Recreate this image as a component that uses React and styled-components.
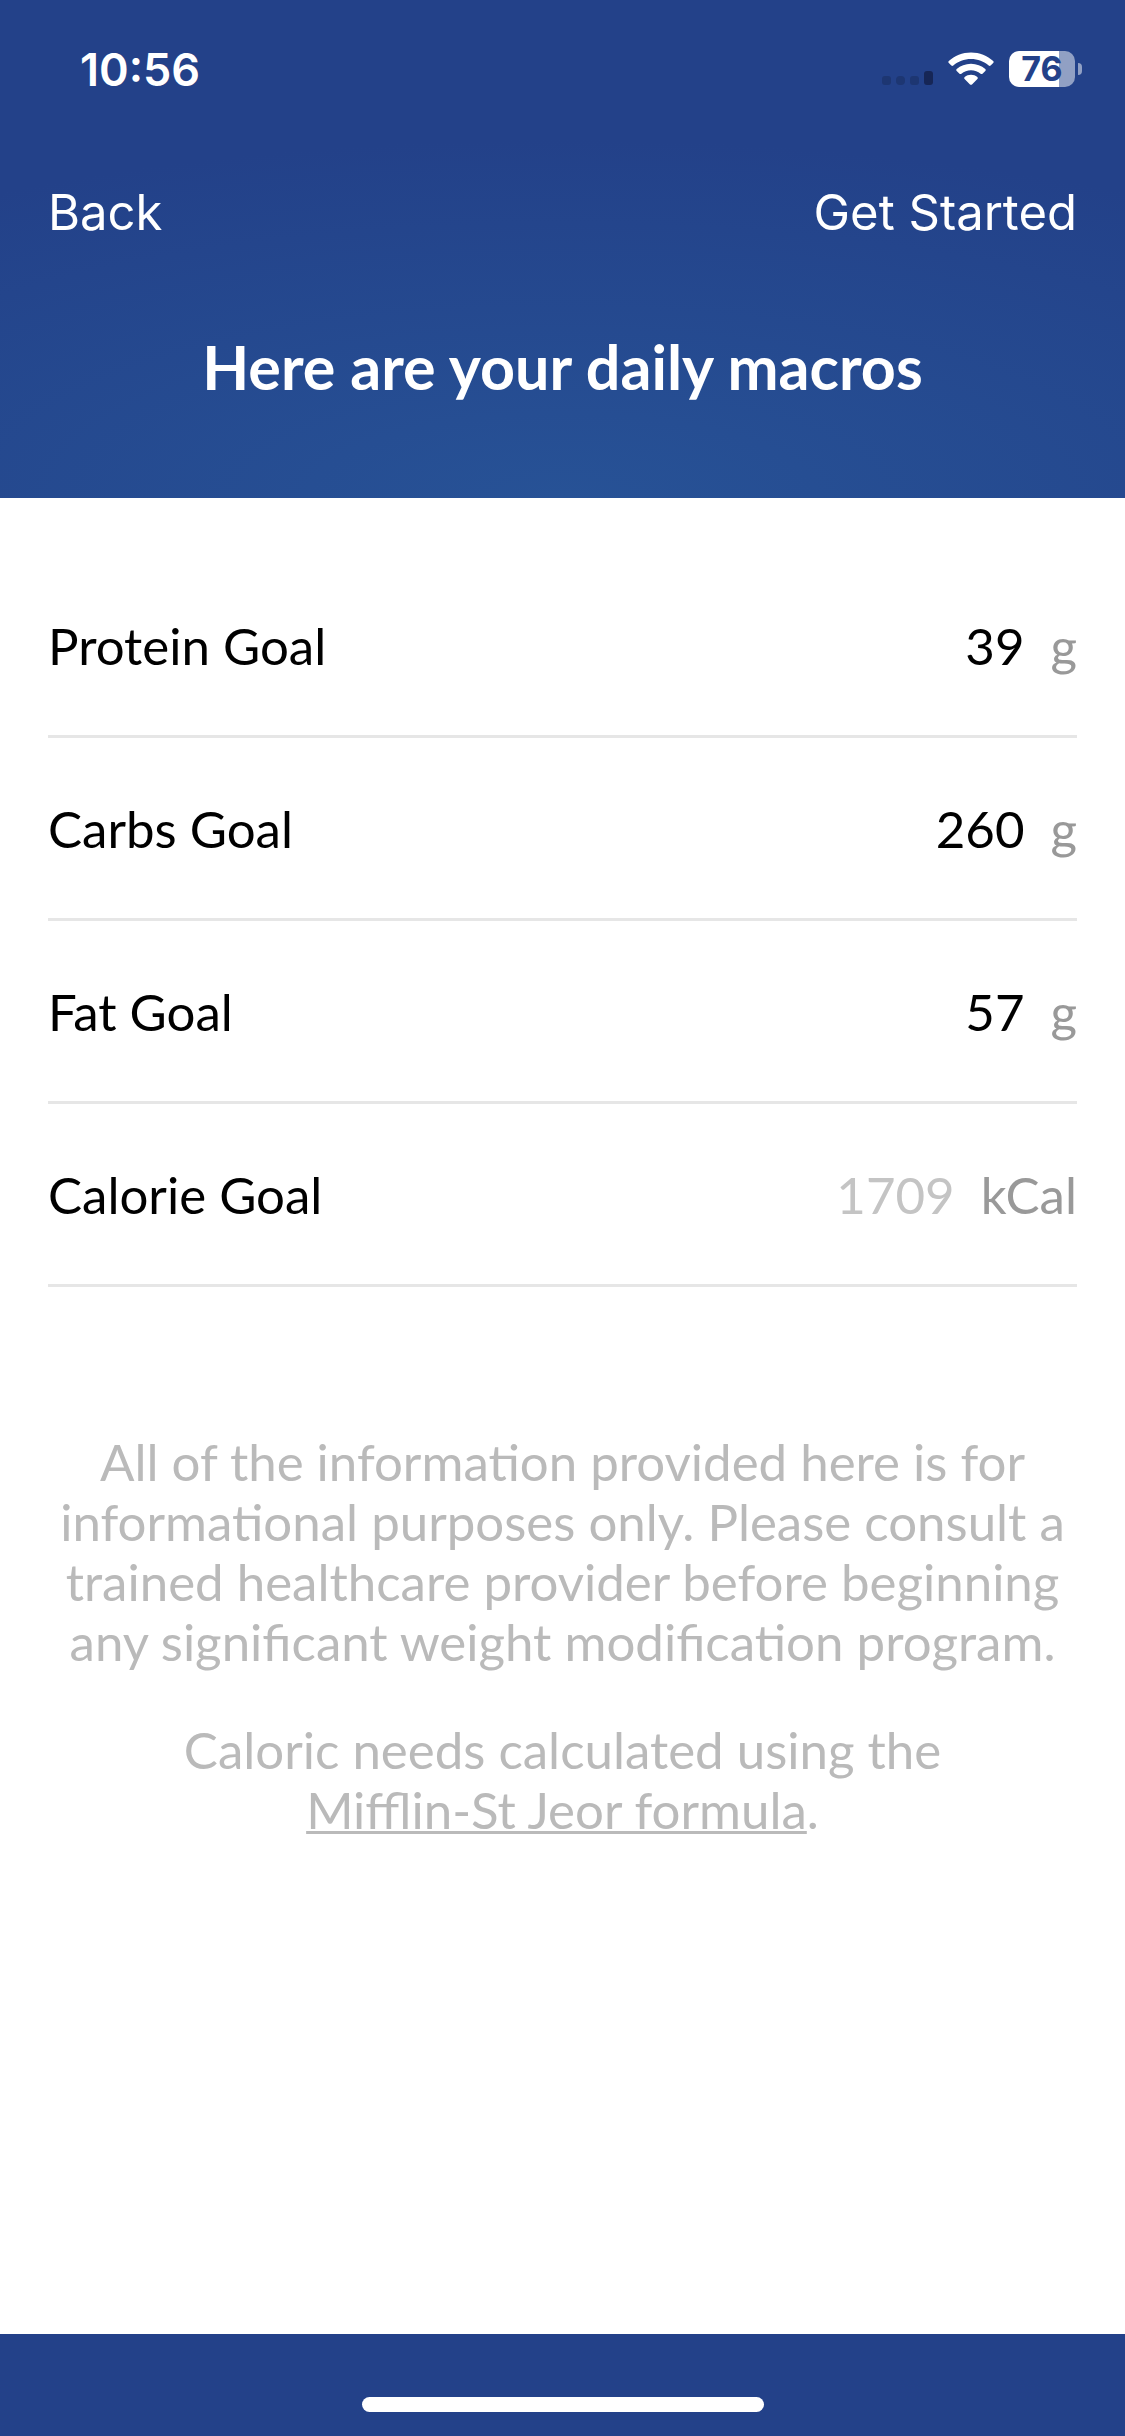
import styled, { createGlobalStyle } from "styled-components";

const goals = [
  { id: "protein", label: "Protein Goal", value: "39", unit: "g" },
  { id: "carbs", label: "Carbs Goal", value: "260", unit: "g" },
  { id: "fat", label: "Fat Goal", value: "57", unit: "g" },
  { id: "calorie", label: "Calorie Goal", value: "1709", unit: "kCal", readOnly: true },
];

const App = () => {
  return (
    <Screen>
      <GlobalStyle />
      <Header>
        <StatusBar>
          <Time>10:56</Time>
          <StatusIcons>
            <SignalIcon />
            <WifiIcon />
            <Battery>
              <BatteryBody>76</BatteryBody>
              <BatteryTip />
            </Battery>
          </StatusIcons>
        </StatusBar>
        <NavBar>
          <NavButton type="button">Back</NavButton>
          <NavButton type="button">Get Started</NavButton>
        </NavBar>
        <Title>Here are your daily macros</Title>
      </Header>
      <Content>
        {goals.map((goal) => (
          <GoalRow key={goal.id}>
            <GoalLabel htmlFor={goal.id}>{goal.label}</GoalLabel>
            <GoalInput
              id={goal.id}
              inputMode="numeric"
              defaultValue={goal.value}
              readOnly={goal.readOnly}
            />
            <GoalUnit>{goal.unit}</GoalUnit>
          </GoalRow>
        ))}
        <Notes>
          <Note>
            All of the information provided here is for informational purposes
            only. Please consult a trained healthcare provider before beginning
            any significant weight modification program.
          </Note>
          <Note>
            Caloric needs calculated using the
            <br />
            <FormulaLink href="#formula">Mifflin-St Jeor formula</FormulaLink>.
          </Note>
        </Notes>
      </Content>
      <Footer>
        <HomeIndicator />
      </Footer>
    </Screen>
  );
};

const SignalIcon = () => (
  <svg width="51" height="34" viewBox="0 0 51 34" aria-hidden="true">
    <g fill="#1d3672">
      <rect x="0" y="24" width="9" height="9" rx="3" />
      <rect x="14" y="24" width="9" height="9" rx="4" />
      <rect x="28" y="24" width="9" height="9" rx="3" />
    </g>
    <rect x="42" y="19" width="9" height="14" rx="3" fill="#162656" />
  </svg>
);

const WifiIcon = () => (
  <svg width="46" height="34" viewBox="0 0 46 34" fill="white" aria-hidden="true">
    <path d="M23 0.500C14.400 0.500 6.600 3.800 0.800 9c-.6.500-.6 1.300 0 1.900l2.600 2.600c.5.500 1.300.500 1.900 0C10 9.500 16.200 7 23 7s13 2.500 17.700 6.500c.6.500 1.400.5 1.900 0l2.600-2.600c.6-.6.6-1.400 0-1.900C39.400 3.800 31.600.5 23 .5z" />
    <path d="M23 11.700c-5.500 0-10.500 2.100-14.300 5.300-.6.500-.6 1.300 0 1.900l2.800 2.800c.5.500 1.300.5 1.900.1C16 19.500 19.300 18.200 23 18.200s7 1.300 9.600 3.600c.6.400 1.400.4 1.900-.1l2.800-2.800c.6-.6.6-1.400 0-1.900-3.800-3.200-8.800-5.300-14.300-5.300z" />
    <path d="M23 22.800c-2.400 0-4.600.8-6.300 2.100-.6.500-.7 1.400-.1 2l5.400 5.500c.6.600 1.400.6 2 0l5.400-5.500c.6-.6.5-1.500-.1-2-1.700-1.300-3.900-2.100-6.300-2.100z" />
  </svg>
);

const GlobalStyle = createGlobalStyle`
  * {
    box-sizing: border-box;
  }

  body {
    margin: 0;
    font-family: Lato, sans-serif;
    background-color: white;
  }
`;

const Screen = styled.div`
  display: flex;
  flex-direction: column;
  min-height: 100vh;
`;

const Header = styled.header`
  padding: 40px 0 93px;
  color: white;
  background: radial-gradient(ellipse 96% 72% at 50% 100%, #275296, #234189);
`;

const StatusBar = styled.div`
  display: flex;
  justify-content: space-between;
  align-items: center;
  height: 58px;
  padding: 0 43px 0 80px;
  font-family: Inter, sans-serif;
`;

const Time = styled.span`
  font-size: 45px;
  font-weight: 600;
`;

const StatusIcons = styled.div`
  display: flex;
  align-items: center;
  gap: 15px;
`;

const Battery = styled.div`
  display: flex;
  align-items: center;
  gap: 3px;
`;

const BatteryBody = styled.span`
  width: 66px;
  height: 36px;
  border-radius: 10px;
  color: #234189;
  background: linear-gradient(90deg, white 76%, #91a0c4 76%);
  font-size: 34px;
  font-weight: 700;
  line-height: 36px;
  text-align: center;
`;

const BatteryTip = styled.span`
  width: 4px;
  height: 12px;
  border-radius: 0 4px 4px 0;
  background-color: #91a0c4;
`;

const NavBar = styled.nav`
  display: flex;
  justify-content: space-between;
  margin-top: 83px;
  padding: 0 48px;
`;

const NavButton = styled.button`
  padding: 0;
  border: none;
  color: white;
  background: none;
  font-family: Inter, sans-serif;
  font-size: 49px;
  font-weight: 400;
  line-height: 64px;
  cursor: pointer;
`;

const Title = styled.h1`
  margin: 84px 48px 0;
  font-size: 61px;
  font-weight: 700;
  line-height: 76px;
  text-align: center;
`;

const Content = styled.main`
  flex: 1;
  padding: 57px 48px;
`;

const GoalRow = styled.div`
  display: flex;
  align-items: center;
  height: 183px;
  border-bottom: 3px solid #e6e6e6;
  font-size: 51px;
`;

const GoalLabel = styled.label`
  color: black;
`;

const GoalInput = styled.input`
  flex: 1;
  min-width: 0;
  padding: 0;
  border: none;
  color: ${(props) => (props.readOnly ? "#c4c4c4" : "black")};
  background: none;
  font: inherit;
  text-align: right;
`;

const GoalUnit = styled.span`
  margin-left: 26px;
  color: #999;
`;

const Notes = styled.section`
  margin-top: 145px;
  color: #bababa;
  font-size: 51px;
  line-height: 60px;
  text-align: center;
`;

const Note = styled.p`
  margin: 0 0 48px;
`;

const FormulaLink = styled.a`
  color: inherit;
  text-decoration-thickness: 3px;
  text-underline-offset: 2px;
  text-decoration-skip-ink: none;
`;

const Footer = styled.footer`
  display: flex;
  justify-content: center;
  padding: 63px 0 24px;
  background-color: #234189;
`;

const HomeIndicator = styled.div`
  width: 402px;
  height: 15px;
  border-radius: 8px;
  background-color: white;
`;

export default App;
